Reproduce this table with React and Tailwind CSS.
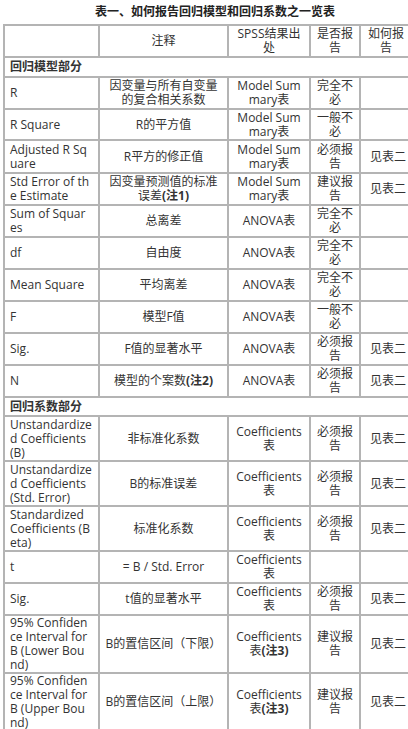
import React from 'react'

const font = { fontFamily: '"Open Sans", "Noto Sans CJK SC", sans-serif' }

// [name, note, source, report, how, height]
const modelRows = [
  [['R'], ['因变量与所有自变量', '的复合相关系数'], ['Model Sum', 'mary表'], ['完全不', '必'], [], 32],
  [['R Square'], ['R的平方值'], ['Model Sum', 'mary表'], ['一般不', '必'], [], 31],
  [['Adjusted R Sq', 'uare'], ['R平方的修正值'], ['Model Sum', 'mary表'], ['必须报', '告'], ['见表二'], 33],
  [['Std Error of th', 'e Estimate'], ['因变量预测值的标准', <>误差<b>(注1)</b></>], ['Model Sum', 'mary表'], ['建议报', '告'], ['见表二'], 32],
  [['Sum of Squar', 'es'], ['总离差'], ['ANOVA表'], ['完全不', '必'], [], 32],
  [['df'], ['自由度'], ['ANOVA表'], ['完全不', '必'], [], 32],
  [['Mean Square'], ['平均离差'], ['ANOVA表'], ['完全不', '必'], [], 32],
  [['F'], ['模型F值'], ['ANOVA表'], ['一般不', '必'], [], 32],
  [['Sig.'], ['F值的显著水平'], ['ANOVA表'], ['必须报', '告'], ['见表二'], 32],
  [['N'], [<>模型的个案数<b>(注2)</b></>], ['ANOVA表'], ['必须报', '告'], ['见表二'], 32],
]

const coefRows = [
  [['Unstandardize', 'd Coefficients', '(B)'], ['非标准化系数'], ['Coefficients', '表'], ['必须报', '告'], ['见表二'], 45],
  [['Unstandardize', 'd Coefficients', '(Std. Error)'], ['B的标准误差'], ['Coefficients', '表'], ['必须报', '告'], ['见表二'], 45],
  [['Standardized', 'Coefficients (B', 'eta)'], ['标准化系数'], ['Coefficients', '表'], ['必须报', '告'], ['见表二'], 45],
  [['t'], ['= B / Std. Error'], ['Coefficients', '表'], [], [], 32],
  [['Sig.'], ['t值的显著水平'], ['Coefficients', '表'], ['必须报', '告'], ['见表二'], 32],
  [['95% Confiden', 'ce Interval for', 'B (Lower Bou', 'nd)'], ['B的置信区间（下限）'], ['Coefficients', <>表<b>(注3)</b></>], ['建议报', '告'], ['见表二'], 58],
  [['95% Confiden', 'ce Interval for', 'B (Upper Bou', 'nd)'], ['B的置信区间（上限）'], ['Coefficients', <>表<b>(注3)</b></>], ['建议报', '告'], ['见表二'], 58],
]

const Lines = ({ lines }) =>
  lines.map((l, i) => (
    <React.Fragment key={i}>
      {i > 0 && <br />}
      {l}
    </React.Fragment>
  ))

const cell = 'border-2 border-[#b4b4b4] px-0 py-0 align-middle whitespace-nowrap leading-[14px]'

const Row = ({ row }) => {
  const [name, note, src, rep, how, h] = row
  return (
    <tr style={{ height: h }}>
      <td className={`${cell} pl-[5px] text-left`}><Lines lines={name} /></td>
      <td className={`${cell} text-center`}><Lines lines={note} /></td>
      <td className={`${cell} text-center`}><Lines lines={src} /></td>
      <td className={`${cell} text-center`}><Lines lines={rep} /></td>
      <td className={`${cell} text-center`}><Lines lines={how} /></td>
    </tr>
  )
}

const Section = ({ title, h }) => (
  <tr style={{ height: h }}>
    <td colSpan={5} className={`${cell} pl-[5px] text-left font-bold`}>{title}</td>
  </tr>
)

export default function App() {
  return (
    <div className="w-[408px] h-[729px] overflow-hidden bg-white text-[#333] text-[12px]" style={font}>
      <div className="w-[412px] ml-[3px]">
        <div className="h-[24px] pt-[5px] pl-[92px] text-left font-bold leading-[14px] text-[#222]">
          表一、如何报告回归模型和回归系数之一览表
        </div>
        <table className="w-[412px] table-fixed border-collapse">
          <colgroup>
            <col className="w-[95px]" />
            <col className="w-[129px]" />
            <col className="w-[82px]" />
            <col className="w-[50px]" />
            <col className="w-[56px]" />
          </colgroup>
          <tbody>
            <tr style={{ height: 32 }}>
              <td className={cell}></td>
              <td className={`${cell} text-center`}>注释</td>
              <td className={`${cell} text-center`}>SPSS结果出<br />处</td>
              <td className={`${cell} text-center`}>是否报<br />告</td>
              <td className={`${cell} pl-[7px] text-left`}><span className="inline-block text-center">如何报<br />告</span></td>
            </tr>
            <Section title="回归模型部分" h={20} />
            {modelRows.map((r, i) => <Row key={i} row={r} />)}
            <Section title="回归系数部分" h={19} />
            {coefRows.map((r, i) => <Row key={i} row={r} />)}
          </tbody>
        </table>
      </div>
    </div>
  )
}
